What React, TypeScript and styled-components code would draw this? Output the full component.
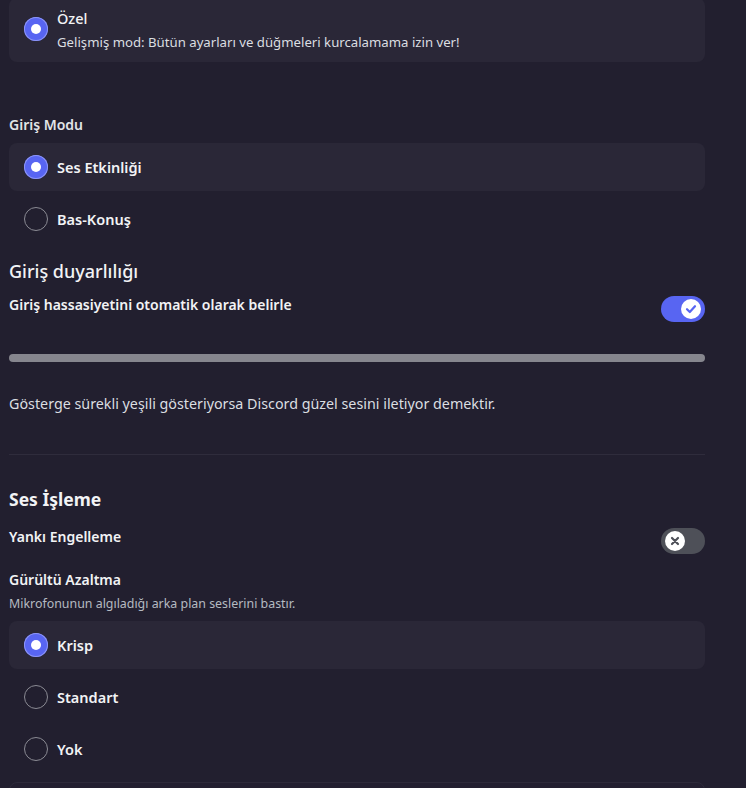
import React from "react";
import styled, { createGlobalStyle } from "styled-components";

const Global = createGlobalStyle`
  html, body { margin: 0; padding: 0; background: #221f2f; overflow: hidden; }
  body { font-family: "Noto Sans", "Liberation Sans", sans-serif; color: #dbdee1; }
`;

const Page = styled.div`
  width: 696px;
  margin: -2px 0 0 9px;
  display: flex;
  flex-direction: column;
`;

const Card = styled.div<{ $mt?: number; $selected?: boolean; $pad?: string }>`
  margin-top: ${(p) => p.$mt ?? 0}px;
  background: ${(p) => (p.$selected ? "#2a2737" : "transparent")};
  border-radius: 8px;
  padding: ${(p) => p.$pad ?? "0 15px"};
  display: flex;
  align-items: center;
  gap: 9px;
  min-height: 48px;
  box-sizing: border-box;
`;

const OptionGroup = styled.div<{ $mt?: number }>`
  margin-top: ${(p) => p.$mt ?? 0}px;
  display: flex;
  flex-direction: column;
  gap: 4px;
`;

const RadioCircle = styled.span<{ $on?: boolean }>`
  width: 24px;
  height: 24px;
  border-radius: 50%;
  box-sizing: border-box;
  flex-shrink: 0;
  display: flex;
  align-items: center;
  justify-content: center;
  border: ${(p) => (p.$on ? "none" : "1.5px solid #8b8b94")};
  background: ${(p) => (p.$on ? "#5865f2" : "transparent")};
  box-shadow: ${(p) => (p.$on ? "0 0 0 1px #8e96f5 inset" : "none")};
  &::after {
    content: "";
    display: ${(p) => (p.$on ? "block" : "none")};
    width: 10px;
    height: 10px;
    border-radius: 50%;
    background: #ffffff;
  }
`;

const OptionText = styled.div`
  display: flex;
  flex-direction: column;
`;

const OptionTitle = styled.div<{ $weight?: number }>`
  font-size: 14.5px;
  line-height: 20px;
  font-weight: ${(p) => p.$weight ?? 600};
  color: #f2f3f5;
`;

const OptionSub = styled.div`
  margin-top: 6px;
  font-size: 13.2px;
  line-height: 16px;
  color: #dbdee1;
`;

const Label = styled.div<{ $mt?: number }>`
  margin-top: ${(p) => p.$mt ?? 0}px;
  font-size: 14px;
  line-height: 18px;
  font-weight: 600;
  color: #e3e5e8;
`;

const Heading = styled.div<{ $mt?: number; $weight?: number; $size?: number }>`
  margin-top: ${(p) => p.$mt ?? 0}px;
  font-size: ${(p) => p.$size ?? 18}px;
  line-height: 24px;
  font-weight: ${(p) => p.$weight ?? 500};
  color: #f2f3f5;
`;

const SettingRow = styled.div<{ $mt?: number }>`
  margin-top: ${(p) => p.$mt ?? 0}px;
  display: flex;
  justify-content: space-between;
  align-items: flex-start;
`;

const SettingLabel = styled.div<{ $mt?: number }>`
  margin-top: ${(p) => p.$mt ?? 0}px;
  font-size: 14px;
  line-height: 18px;
  font-weight: 600;
  color: #f2f3f5;
`;

const Toggle = styled.div<{ $on?: boolean }>`
  width: 44px;
  height: 26px;
  border-radius: 13px;
  background: ${(p) => (p.$on ? "#5865f2" : "#4e5058")};
  display: flex;
  align-items: center;
  justify-content: ${(p) => (p.$on ? "flex-end" : "flex-start")};
  padding: 0 4px;
  box-sizing: border-box;
  flex-shrink: 0;
`;

const Knob = styled.span`
  width: 20px;
  height: 20px;
  border-radius: 50%;
  background: #ffffff;
  display: flex;
  align-items: center;
  justify-content: center;
`;

const Meter = styled.div<{ $mt?: number }>`
  margin-top: ${(p) => p.$mt ?? 0}px;
  height: 8px;
  border-radius: 4px;
  background: #86868e;
`;

const Description = styled.div<{ $mt?: number }>`
  margin-top: ${(p) => p.$mt ?? 0}px;
  font-size: 14.3px;
  line-height: 20px;
  color: #dbdee1;
`;

const SubText = styled.div<{ $mt?: number }>`
  margin-top: ${(p) => p.$mt ?? 0}px;
  font-size: 12.4px;
  line-height: 16px;
  color: #b5bac1;
`;

const Divider = styled.div<{ $mt?: number }>`
  margin-top: ${(p) => p.$mt ?? 0}px;
  height: 1px;
  background: #2f2c3c;
`;

const BottomCard = styled.div<{ $mt?: number }>`
  margin-top: ${(p) => p.$mt ?? 0}px;
  height: 48px;
  border-radius: 8px;
  border: 1px solid #2d2a3a;
  background: #231f30;
`;

const Check = () => (
  <svg width="14" height="14" viewBox="0 0 14 14">
    <path d="M3 7.2 L5.8 10 L11 4.2" fill="none" stroke="#5865f2" strokeWidth="2.2" strokeLinecap="round" strokeLinejoin="round" />
  </svg>
);

const Cross = () => (
  <svg width="12" height="12" viewBox="0 0 12 12">
    <path d="M3 3 L9 9 M9 3 L3 9" fill="none" stroke="#4e5058" strokeWidth="2.2" strokeLinecap="round" />
  </svg>
);

type OptProps = { title: string; on?: boolean };
const Option = ({ title, on }: OptProps) => (
  <Card $selected={on}>
    <RadioCircle $on={on} />
    <OptionTitle>{title}</OptionTitle>
  </Card>
);

export default function App() {
  return (
    <>
      <Global />
      <Page>
        <Card $selected $pad="10px 15px 12px">
          <RadioCircle $on />
          <OptionText>
            <OptionTitle $weight={500}>Özel</OptionTitle>
            <OptionSub>Gelişmiş mod: Bütün ayarları ve düğmeleri kurcalamama izin ver!</OptionSub>
          </OptionText>
        </Card>

        <Label $mt={54}>Giriş Modu</Label>
        <OptionGroup $mt={9}>
          <Option title="Ses Etkinliği" on />
          <Option title="Bas-Konuş" />
        </OptionGroup>

        <Heading $mt={16}>Giriş duyarlılığı</Heading>
        <SettingRow $mt={13}>
          <SettingLabel>Giriş hassasiyetini otomatik olarak belirle</SettingLabel>
          <Toggle $on>
            <Knob>
              <Check />
            </Knob>
          </Toggle>
        </SettingRow>
        <Meter $mt={32} />
        <Description $mt={32}>
          Gösterge sürekli yeşili gösteriyorsa Discord güzel sesini iletiyor demektir.
        </Description>
        <Divider $mt={40} />

        <Heading $mt={32} $weight={700} $size={17.5}>Ses İşleme</Heading>
        <SettingRow $mt={17}>
          <SettingLabel>Yankı Engelleme</SettingLabel>
          <Toggle>
            <Knob>
              <Cross />
            </Knob>
          </Toggle>
        </SettingRow>
        <SettingLabel $mt={17}>Gürültü Azaltma</SettingLabel>
        <SubText $mt={7}>Mikrofonunun algıladığı arka plan seslerini bastır.</SubText>
        <OptionGroup $mt={9}>
          <Option title="Krisp" on />
          <Option title="Standart" />
          <Option title="Yok" />
        </OptionGroup>
        <BottomCard $mt={9} />
      </Page>
    </>
  );
}
